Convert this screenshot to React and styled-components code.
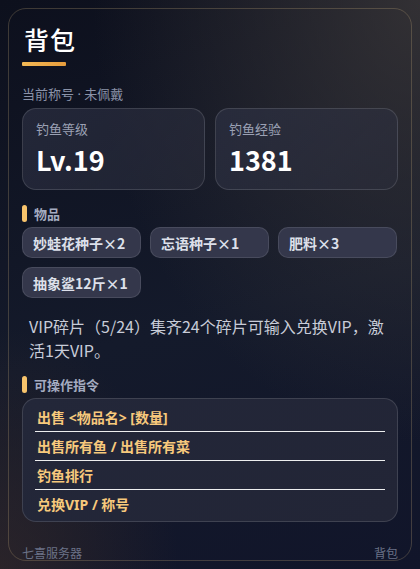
import styled, { createGlobalStyle } from "styled-components";

const GlobalStyle = createGlobalStyle`
  html, body {
    margin: 0;
    height: 100%;
  }
  body {
    padding: 8px;
    box-sizing: border-box;
    font-family: "Noto Sans CJK SC", "Noto Sans", sans-serif;
    background:
      radial-gradient(ellipse at 100% 0%, rgba(62, 58, 58, 0.75) 0, rgba(62, 58, 58, 0) 55%),
      radial-gradient(ellipse at 0% 100%, rgba(58, 44, 40, 0.6) 0, rgba(58, 44, 40, 0) 30%),
      linear-gradient(165deg, #0d101d 0%, #141a2b 55%, #11152a 100%);
  }
`;

const Card = styled.div`
  height: 553px;
  box-sizing: border-box;
  border: 1px solid rgba(190, 165, 120, 0.28);
  border-radius: 18px;
  padding: 15px 13px 0;
  display: flex;
  flex-direction: column;
`;

const Title = styled.h1`
  margin: 0;
  font-size: 25px;
  line-height: 30px;
  font-weight: 500;
  color: #ffffff;
  letter-spacing: 1px;
  padding-left: 2px;
`;

const TitleBar = styled.div`
  margin-top: 8px;
  width: 44px;
  height: 4px;
  border-radius: 1px;
  background: linear-gradient(90deg, #f3b955, #e69c3c);
`;

const Subtitle = styled.div`
  margin-top: 20px;
  font-family: "Noto Sans", "Noto Sans CJK SC", sans-serif;
  font-size: 13px;
  line-height: 16px;
  color: #8a92a8;
`;

const StatGrid = styled.div`
  margin-top: 6px;
  display: grid;
  grid-template-columns: 1fr 1fr;
  gap: 10px;
`;

const StatBox = styled.div`
  height: 82px;
  box-sizing: border-box;
  padding: 11px 13px 0;
  border-radius: 14px;
  border: 1px solid rgba(255, 255, 255, 0.13);
  background: linear-gradient(135deg, rgba(48, 52, 72, 0.6), rgba(44, 46, 60, 0.55));
`;

const StatLabel = styled.div`
  font-size: 13px;
  line-height: 18px;
  color: #9ba1b4;
`;

const StatValue = styled.div`
  margin-top: 5px;
  font-size: 27px;
  line-height: 34px;
  font-weight: 700;
  color: #ffffff;
`;

const SectionHead = styled.div`
  margin-top: ${(p) => p.$top}px;
  height: 17px;
  display: flex;
  align-items: center;
  gap: 7px;
  font-size: 13px;
  font-weight: 700;
  color: #a4abc0;
  &::before {
    content: "";
    width: 5px;
    height: 17px;
    border-radius: 3px;
    background: #f8c46c;
  }
`;

const ChipGrid = styled.div`
  margin-top: 5px;
  display: grid;
  grid-template-columns: repeat(3, 119px);
  gap: 9px;
`;

const Chip = styled.div`
  height: 31px;
  box-sizing: border-box;
  display: flex;
  align-items: center;
  padding: 0 10px;
  border-radius: 10px;
  border: 1px solid rgba(255, 255, 255, 0.1);
  background: #34374b;
  font-size: 14px;
  font-weight: 700;
  color: #dde0ea;
  white-space: nowrap;
`;

const Note = styled.p`
  margin: 16px 0 0;
  padding: 0 6px 0 7px;
  font-size: 16px;
  line-height: 24px;
  color: #c8ccd8;
`;

const CommandBox = styled.div`
  margin-top: 5px;
  padding: 4px 12px 3px;
  border-radius: 14px;
  border: 1px solid rgba(255, 255, 255, 0.13);
  background: linear-gradient(135deg, #232739, #222536);
`;

const CommandRow = styled.div`
  height: 28px;
  display: flex;
  align-items: center;
  padding-left: 2px;
  font-family: "Noto Sans", "Noto Sans CJK SC", sans-serif;
  font-size: 14px;
  font-weight: 700;
  color: #f7c97c;
  border-bottom: 1px solid rgba(255, 255, 255, 0.92);
  &:last-child {
    border-bottom: none;
  }
`;

const Footer = styled.div`
  margin-top: auto;
  display: flex;
  justify-content: space-between;
  font-size: 12px;
  line-height: 15px;
  color: #6b7287;
`;

const items = ["妙蛙花种子×2", "忘语种子×1", "肥料×3", "抽象鲨12斤×1"];
const commands = [
  "出售 <物品名> [数量]",
  "出售所有鱼 / 出售所有菜",
  "钓鱼排行",
  "兑换VIP / 称号",
];

export default function App() {
  return (
    <>
      <GlobalStyle />
      <Card>
        <Title>背包</Title>
        <TitleBar />
        <Subtitle>当前称号 · 未佩戴</Subtitle>
        <StatGrid>
          <StatBox>
            <StatLabel>钓鱼等级</StatLabel>
            <StatValue>Lv.19</StatValue>
          </StatBox>
          <StatBox>
            <StatLabel>钓鱼经验</StatLabel>
            <StatValue>1381</StatValue>
          </StatBox>
        </StatGrid>
        <SectionHead $top={15}>物品</SectionHead>
        <ChipGrid>
          {items.map((it) => (
            <Chip key={it}>{it}</Chip>
          ))}
        </ChipGrid>
        <Note>VIP碎片（5/24）集齐24个碎片可输入兑换VIP，激活1天VIP。</Note>
        <SectionHead $top={14}>可操作指令</SectionHead>
        <CommandBox>
          {commands.map((c) => (
            <CommandRow key={c}>{c}</CommandRow>
          ))}
        </CommandBox>
        <Footer>
          <span>七喜服务器</span>
          <span>背包</span>
        </Footer>
      </Card>
    </>
  );
}
